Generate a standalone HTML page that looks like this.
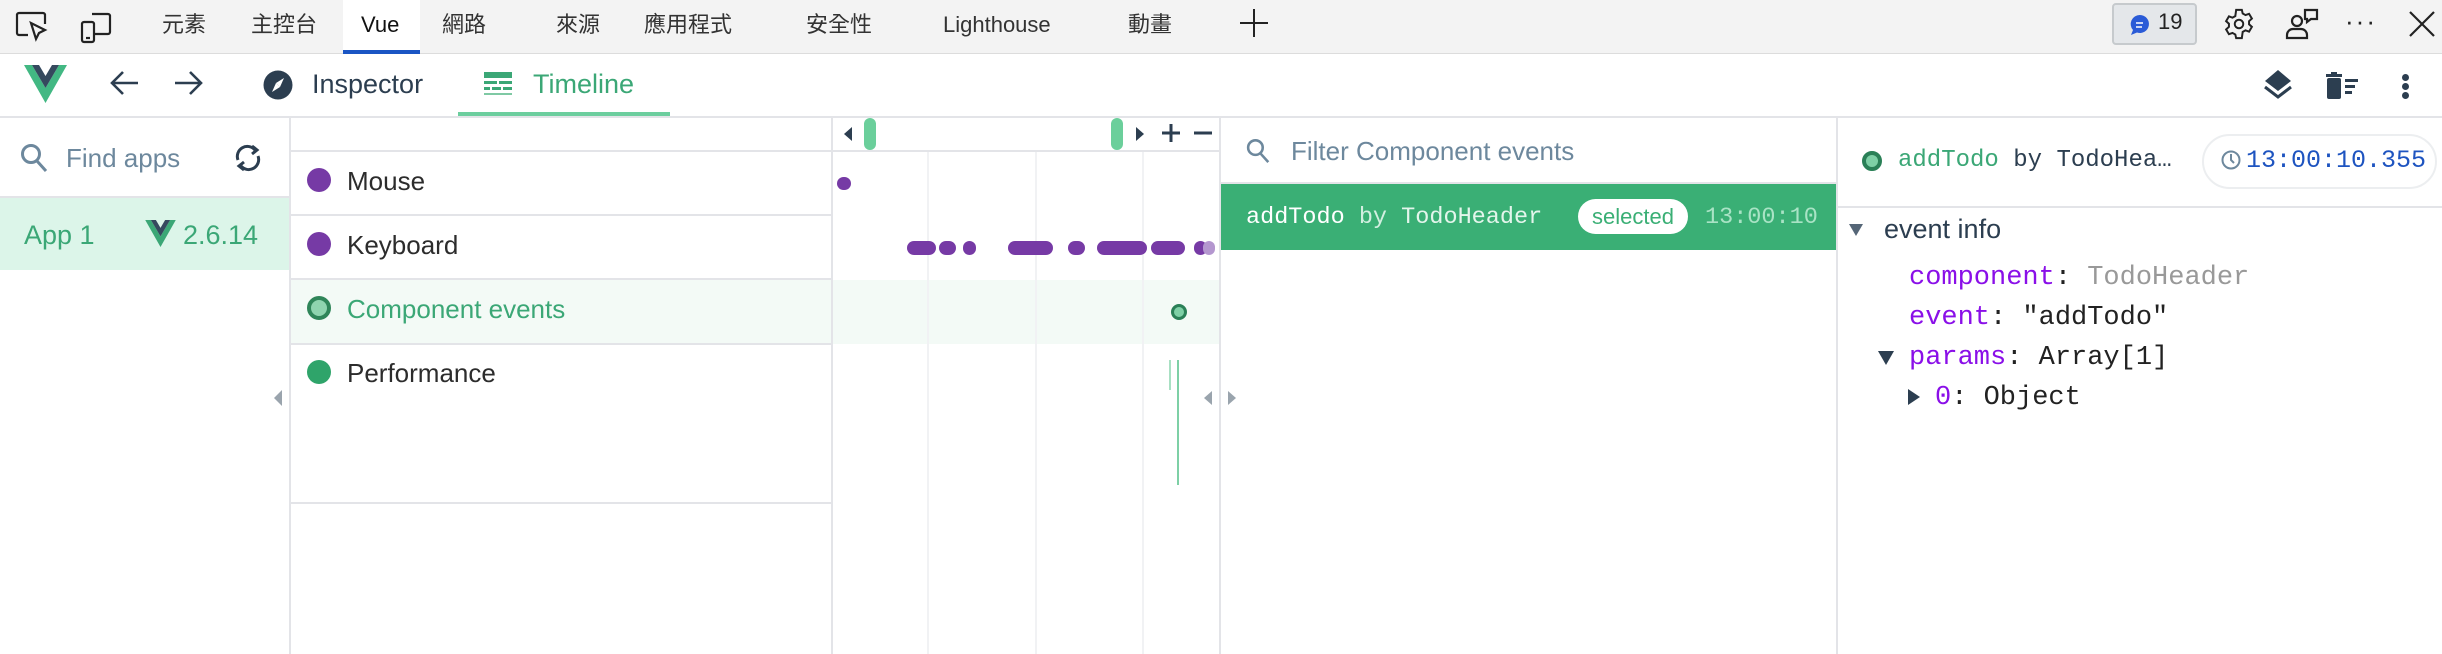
<!DOCTYPE html>
<html><head><meta charset="utf-8"><style>
*{margin:0;padding:0;box-sizing:border-box}
body{width:2442px;height:654px;overflow:hidden;background:#fff;position:relative;font-family:"Liberation Sans","Noto Sans CJK TC",sans-serif;color:#2c3e50}
.a{position:absolute;white-space:nowrap}
.mono{font-family:"Liberation Mono","DejaVu Sans Mono",monospace}
.tab{position:absolute;top:10px;font-size:22px;color:#333;line-height:30px}
.hl{position:absolute;background:#e3e4e8}
.vl{position:absolute;background:#e3e4e8;width:2px}
.dot{position:absolute;border-radius:50%}
.kb{position:absolute;top:241px;height:14px;border-radius:7px;background:#763aa5}
</style></head><body>
<!-- top bar -->
<div class="a" style="left:0;top:0;width:2442px;height:54px;background:#f3f3f3;border-bottom:1px solid #dcdcdc"></div>
<svg class="a" style="left:14px;top:11px" width="36" height="32" viewBox="0 0 36 32" fill="none" stroke="#222" stroke-width="2.2"><path d="M14 24H5a2 2 0 0 1-2-2V4a2 2 0 0 1 2-2h24a2 2 0 0 1 2 2v9"/><path d="M17 12l5 16 3-6 6-3z"/></svg>
<svg class="a" style="left:80px;top:10px" width="34" height="34" viewBox="0 0 34 34" fill="none" stroke="#222" stroke-width="2.2"><rect x="2" y="12" width="12" height="20" rx="2"/><path d="M12 4h16a2 2 0 0 1 2 2v16a2 2 0 0 1-2 2h-14"/><path d="M6 28h4"/></svg>
<div class="tab" style="left:162px">元素</div>
<div class="tab" style="left:251px">主控台</div>
<div class="a" style="left:343px;top:0;width:77px;height:54px;background:#fff;border-bottom:4px solid #1a55c4"></div>
<div class="tab" style="left:361px;color:#111">Vue</div>
<div class="tab" style="left:442px">網路</div>
<div class="tab" style="left:556px">來源</div>
<div class="tab" style="left:644px">應用程式</div>
<div class="tab" style="left:806px">安全性</div>
<div class="tab" style="left:943px">Lighthouse</div>
<div class="tab" style="left:1128px">動畫</div>
<svg class="a" style="left:1238px;top:7px" width="32" height="32" viewBox="0 0 32 32" stroke="#222" stroke-width="2"><path d="M16 2v28M2 16h28"/></svg>
<div class="a" style="left:2112px;top:3px;width:85px;height:42px;background:#e4e7ea;border:2px solid #c6cacd;border-radius:4px"></div>
<svg class="a" style="left:2128px;top:13px" width="24" height="24" viewBox="0 0 24 24"><path d="M12 2a9 9 0 1 1-3 17.5L3 22l2-5A9 9 0 0 1 12 2z" fill="#2a5bd7"/><path d="M8 10h7M8 14h6" stroke="#fff" stroke-width="1.6"/></svg>
<div class="a" style="left:2158px;top:9px;font-size:22px;color:#222">19</div>
<svg class="a" style="left:2222px;top:7px" width="34" height="34" viewBox="0 0 24 24" fill="none" stroke="#222" stroke-width="1.4"><circle cx="12" cy="12" r="3"/><path d="M10 2h4l.6 2.6 2 1.1 2.5-.9 2 3.4-2 1.8v2.2l2 1.8-2 3.4-2.5-.9-2 1.1L14 22h-4l-.6-2.6-2-1.1-2.5.9-2-3.4 2-1.8v-2.2l-2-1.8 2-3.4 2.5.9 2-1.1z"/></svg>
<svg class="a" style="left:2285px;top:6px" width="36" height="36" viewBox="0 0 36 36" fill="none" stroke="#222" stroke-width="2.2"><circle cx="12" cy="15" r="5"/><path d="M2 32v-3a6 6 0 0 1 6-6h8a6 6 0 0 1 6 6v3z"/><path d="M20 4h12v9h-6l-4 3v-3h-2z"/></svg>
<div class="a" style="left:2345px;top:6px;font-size:26px;color:#222;letter-spacing:2px">···</div>
<svg class="a" style="left:2409px;top:11px" width="26" height="26" viewBox="0 0 26 26" stroke="#222" stroke-width="2.2"><path d="M1 1l24 24M25 1L1 25"/></svg>

<!-- toolbar -->
<svg class="a" style="left:24px;top:65px" width="43" height="38" viewBox="0 0 43 38"><path d="M0 0h8l13.5 23L35 0h8L21.5 38z" fill="#42b883"/><path d="M8 0h7l6.5 11L28 0h7L21.5 23z" fill="#35495e"/></svg>
<svg class="a" style="left:110px;top:70px" width="30" height="26" viewBox="0 0 30 26" fill="none" stroke="#2c3e50" stroke-width="2.6"><path d="M28 13H3M13 2L2 13l11 11"/></svg>
<svg class="a" style="left:173px;top:70px" width="30" height="26" viewBox="0 0 30 26" fill="none" stroke="#2c3e50" stroke-width="2.6"><path d="M2 13h25M17 2l11 11-11 11"/></svg>
<svg class="a" style="left:263px;top:70px" width="30" height="30" viewBox="0 0 30 30"><circle cx="15" cy="15" r="14.5" fill="#2c3e50"/><path d="M21 8l-4 9-4-4z" fill="#fff"/><path d="M9 22l4-9 4 4z" fill="#fff"/></svg>
<div class="a" style="left:312px;top:69px;font-size:27px;color:#2c3e50">Inspector</div>
<svg class="a" style="left:484px;top:72px" width="28" height="26" viewBox="0 0 28 26" fill="#3ba776"><rect x="0" y="0" width="28" height="6"/><rect x="0" y="9" width="13" height="3"/><rect x="15" y="9" width="13" height="3"/><rect x="0" y="15" width="6" height="3"/><rect x="8" y="15" width="9" height="3"/><rect x="19" y="15" width="9" height="3"/><rect x="0" y="21" width="28" height="2" fill="#7fc9a4"/></svg>
<div class="a" style="left:533px;top:69px;font-size:27px;color:#3ba776">Timeline</div>
<div class="a" style="left:458px;top:112px;width:212px;height:5px;background:#6cce9e"></div>
<svg class="a" style="left:2262px;top:68px" width="32" height="32" viewBox="0 0 32 32" fill="#2c3e50"><path d="M16 2l13 11-13 10L3 13z"/><path d="M3 19l13 10 13-10" fill="none" stroke="#2c3e50" stroke-width="3"/></svg>
<svg class="a" style="left:2326px;top:72px" width="34" height="27" viewBox="0 0 34 27" fill="#2c3e50"><rect x="0" y="2" width="16" height="3"/><rect x="5" y="0" width="6" height="3"/><rect x="1" y="6" width="14" height="21" rx="2"/><rect x="19" y="7" width="13" height="3"/><rect x="19" y="13" width="10" height="3"/><rect x="19" y="19" width="7" height="3"/></svg>
<div class="dot" style="left:2402px;top:74px;width:7px;height:7px;background:#2c3e50"></div>
<div class="dot" style="left:2402px;top:83px;width:7px;height:7px;background:#2c3e50"></div>
<div class="dot" style="left:2402px;top:92px;width:7px;height:7px;background:#2c3e50"></div>
<div class="hl" style="left:0;top:116px;width:2442px;height:2px"></div>

<!-- left panel -->
<svg class="a" style="left:20px;top:143px" width="28" height="30" viewBox="0 0 28 30" fill="none" stroke="#6d889d" stroke-width="3"><circle cx="11" cy="11" r="8.5"/><path d="M17 18l9 10"/></svg>
<div class="a" style="left:66px;top:143px;font-size:26px;color:#6d889d">Find apps</div>
<svg class="a" style="left:232px;top:144px" width="32" height="28" viewBox="0 0 32 28" fill="none" stroke="#2c3e50" stroke-width="3"><path d="M6 16a10 10 0 0 1 17-10"/><path d="M26 12a10 10 0 0 1-17 10"/><path d="M20 2l5 4-5 4" /><path d="M12 18l-5 4 5 4"/></svg>
<div class="hl" style="left:0;top:196px;width:290px;height:2px"></div>
<div class="a" style="left:0;top:198px;width:290px;height:72px;background:#dcf5e9"></div>
<div class="a" style="left:24px;top:220px;font-size:27px;color:#3ba776">App 1</div>
<svg class="a" style="left:145px;top:220px" width="31" height="27" viewBox="0 0 43 38"><path d="M0 0h8l13.5 23L35 0h8L21.5 38z" fill="#3ba776"/><path d="M8 0h7l6.5 11L28 0h7L21.5 23z" fill="#35495e"/></svg>
<div class="a" style="left:183px;top:220px;font-size:27px;color:#3ba776">2.6.14</div>
<svg class="a" style="left:274px;top:390px" width="8" height="16"><path d="M8 0v16L0 8z" fill="#9aa4ad"/></svg>
<div class="vl" style="left:289px;top:117px;height:537px"></div>

<!-- layers list -->
<div class="hl" style="left:291px;top:150px;width:540px;height:2px"></div>
<div class="a" style="left:291px;top:280px;width:540px;height:64px;background:#f3faf6"></div>
<div class="hl" style="left:291px;top:214px;width:540px;height:2px"></div>
<div class="hl" style="left:291px;top:278px;width:540px;height:2px"></div>
<div class="hl" style="left:291px;top:343px;width:540px;height:2px"></div>
<div class="hl" style="left:291px;top:502px;width:540px;height:2px"></div>
<div class="dot" style="left:307px;top:168px;width:24px;height:24px;background:#763aa5"></div>
<div class="a" style="left:347px;top:166px;font-size:26px;color:#2c2c2c">Mouse</div>
<div class="dot" style="left:307px;top:232px;width:24px;height:24px;background:#763aa5"></div>
<div class="a" style="left:347px;top:230px;font-size:26px;color:#2c2c2c">Keyboard</div>
<div class="dot" style="left:307px;top:296px;width:24px;height:24px;background:#8fd4af;border:4px solid #2f8559"></div>
<div class="a" style="left:347px;top:294px;font-size:26px;color:#3ba776">Component events</div>
<div class="dot" style="left:307px;top:360px;width:24px;height:24px;background:#2fa46a"></div>
<div class="a" style="left:347px;top:358px;font-size:26px;color:#2c2c2c">Performance</div>
<div class="vl" style="left:831px;top:117px;height:537px"></div>

<!-- timeline -->
<div class="a" style="left:833px;top:280px;width:386px;height:64px;background:#f3faf6"></div>
<div class="a" style="left:927px;top:152px;width:2px;height:502px;background:#f1f2f4"></div>
<div class="a" style="left:1035px;top:152px;width:2px;height:502px;background:#f1f2f4"></div>
<div class="a" style="left:1142px;top:152px;width:2px;height:502px;background:#f1f2f4"></div>
<div class="hl" style="left:833px;top:150px;width:386px;height:2px"></div>
<svg class="a" style="left:844px;top:127px" width="8" height="14"><path d="M8 0v14L0 7z" fill="#2c3e50"/></svg>
<div class="a" style="left:864px;top:118px;width:12px;height:32px;border-radius:6px;background:#6bcf9b"></div>
<div class="a" style="left:1111px;top:118px;width:12px;height:32px;border-radius:6px;background:#6bcf9b"></div>
<svg class="a" style="left:1136px;top:127px" width="8" height="14"><path d="M0 0v14L8 7z" fill="#2c3e50"/></svg>
<svg class="a" style="left:1162px;top:124px" width="18" height="18" stroke="#2c3e50" stroke-width="3"><path d="M9 0v18M0 9h18"/></svg>
<svg class="a" style="left:1194px;top:124px" width="18" height="18" stroke="#2c3e50" stroke-width="3"><path d="M0 9h18"/></svg>
<div class="a" style="left:837px;top:177px;width:14px;height:13px;border-radius:7px;background:#763aa5"></div>
<div class="kb" style="left:907px;width:29px"></div>
<div class="kb" style="left:939px;width:17px"></div>
<div class="kb" style="left:963px;width:13px"></div>
<div class="kb" style="left:1008px;width:45px"></div>
<div class="kb" style="left:1068px;width:17px"></div>
<div class="kb" style="left:1097px;width:50px"></div>
<div class="kb" style="left:1151px;width:34px"></div>
<div class="kb" style="left:1194px;width:13px"></div>
<div class="kb" style="left:1203px;width:12px;background:#b497cf"></div>
<div class="dot" style="left:1171px;top:304px;width:16px;height:16px;background:#7ed0a6;border:3px solid #2a8057"></div>
<div class="a" style="left:1169px;top:360px;width:2px;height:30px;background:#a8e0c3"></div>
<div class="a" style="left:1177px;top:360px;width:2px;height:125px;background:#7ed0a6"></div>
<svg class="a" style="left:1204px;top:391px" width="8" height="14"><path d="M8 0v14L0 7z" fill="#9aa4ad"/></svg>
<svg class="a" style="left:1228px;top:391px" width="8" height="14"><path d="M0 0v14L8 7z" fill="#9aa4ad"/></svg>
<div class="vl" style="left:1219px;top:117px;height:537px"></div>

<!-- events list -->
<svg class="a" style="left:1246px;top:138px" width="24" height="26" viewBox="0 0 28 30" fill="none" stroke="#6d889d" stroke-width="3"><circle cx="11" cy="11" r="8.5"/><path d="M17 18l9 10"/></svg>
<div class="a" style="left:1291px;top:136px;font-size:26px;color:#6d889d">Filter Component events</div>
<div class="hl" style="left:1221px;top:182px;width:615px;height:2px"></div>
<div class="a" style="left:1221px;top:184px;width:615px;height:66px;background:#3aaf75"></div>
<div class="a mono" style="left:1246px;top:204px;font-size:23.5px;color:#fff">addTodo <span style="color:#d2efe0">by</span> <span style="color:#e3f5eb">TodoHeader</span></div>
<div class="a" style="left:1578px;top:199px;width:110px;height:35px;border-radius:18px;background:#fff;color:#3aaf75;font-size:22px;line-height:35px;text-align:center">selected</div>
<div class="a mono" style="left:1705px;top:204px;font-size:23.5px;color:#a9e3c5">13:00:10</div>
<div class="vl" style="left:1836px;top:117px;height:537px"></div>

<!-- right panel -->
<div class="dot" style="left:1862px;top:151px;width:20px;height:20px;background:#7ed0a6;border:4px solid #2a8057"></div>
<div class="a mono" style="left:1898px;top:147px;font-size:24px;color:#2c3e50"><span style="color:#3ba776">addTodo</span> by TodoHea…</div>
<div class="a" style="left:2202px;top:134px;width:235px;height:55px;border:2px solid #eceef0;border-radius:28px"></div>
<svg class="a" style="left:2221px;top:150px" width="20" height="20" viewBox="0 0 20 20" fill="none" stroke="#6d889d" stroke-width="2"><circle cx="10" cy="10" r="8.5"/><path d="M10 4v6l3 3"/></svg>
<div class="a mono" style="left:2246px;top:146px;font-size:25px;color:#1e54c0">13:00:10.355</div>
<div class="hl" style="left:1838px;top:206px;width:604px;height:2px"></div>
<svg class="a" style="left:1849px;top:224px" width="14" height="12"><path d="M0 0h14L7 12z" fill="#556677"/></svg>
<div class="a" style="left:1884px;top:214px;font-size:27px;color:#2c3e50">event info</div>
<div class="a mono" style="left:1909px;top:263px;font-size:27px;color:#222"><span style="color:#8a0fe8">component</span>: <span style="color:#999">TodoHeader</span></div>
<div class="a mono" style="left:1909px;top:303px;font-size:27px;color:#222"><span style="color:#8a0fe8">event</span>: "addTodo"</div>
<svg class="a" style="left:1878px;top:351px" width="16" height="14"><path d="M0 0h16L8 14z" fill="#2c3e50"/></svg>
<div class="a mono" style="left:1909px;top:343px;font-size:27px;color:#222"><span style="color:#8a0fe8">params</span>: Array[1]</div>
<svg class="a" style="left:1908px;top:389px" width="12" height="16"><path d="M0 0v16L12 8z" fill="#2c3e50"/></svg>
<div class="a mono" style="left:1935px;top:383px;font-size:27px;color:#222"><span style="color:#8a0fe8">0</span>: Object</div>
</body></html>
